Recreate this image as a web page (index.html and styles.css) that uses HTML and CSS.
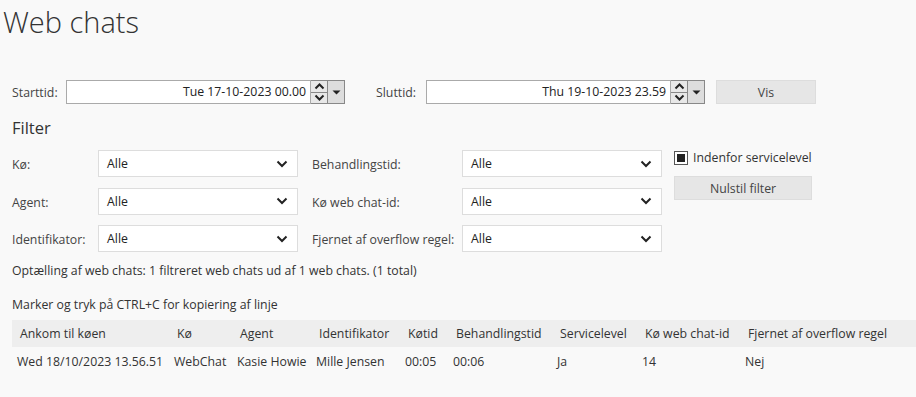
FILE: index.html
```html
<!DOCTYPE html>
<html lang="da">
<head>
    <meta charset="UTF-8">
    <title>Web chats</title>
    <link rel="stylesheet" href="styles.css">
</head>
<body>
    <h1 class="title">Web chats</h1>

    <div class="period">
        <label class="period-label">Starttid:</label>
        <div class="datetime">
            <div class="datetime-value">Tue 17-10-2023 00.00</div>
            <div class="spin">
                <span class="spin-up"><svg width="11" height="7" viewBox="0 0 11 7"><path d="M1.5 5.5 L5.5 1.5 L9.5 5.5" fill="none" stroke="#222" stroke-width="2"/></svg></span>
                <span class="spin-down"><svg width="11" height="7" viewBox="0 0 11 7"><path d="M1.5 1.5 L5.5 5.5 L9.5 1.5" fill="none" stroke="#222" stroke-width="2"/></svg></span>
            </div>
            <div class="drop"><svg width="9" height="5" viewBox="0 0 9 5"><path d="M0.5 0.5 H8.5 L4.5 4.5 Z" fill="#222"/></svg></div>
        </div>

        <label class="period-label end">Sluttid:</label>
        <div class="datetime">
            <div class="datetime-value">Thu 19-10-2023 23.59</div>
            <div class="spin">
                <span class="spin-up"><svg width="11" height="7" viewBox="0 0 11 7"><path d="M1.5 5.5 L5.5 1.5 L9.5 5.5" fill="none" stroke="#222" stroke-width="2"/></svg></span>
                <span class="spin-down"><svg width="11" height="7" viewBox="0 0 11 7"><path d="M1.5 1.5 L5.5 5.5 L9.5 1.5" fill="none" stroke="#222" stroke-width="2"/></svg></span>
            </div>
            <div class="drop"><svg width="9" height="5" viewBox="0 0 9 5"><path d="M0.5 0.5 H8.5 L4.5 4.5 Z" fill="#222"/></svg></div>
        </div>

        <button class="btn btn-vis">Vis</button>
    </div>

    <h2 class="filter-title">Filter</h2>

    <div class="filter">
        <div class="filter-grid">
            <span class="f-label">Kø:</span>
            <div class="select"><span>Alle</span><svg width="12" height="8" viewBox="0 0 12 8"><path d="M1.5 1.5 L6 6 L10.5 1.5" fill="none" stroke="#222" stroke-width="2"/></svg></div>
            <span class="f-label">Behandlingstid:</span>
            <div class="select"><span>Alle</span><svg width="12" height="8" viewBox="0 0 12 8"><path d="M1.5 1.5 L6 6 L10.5 1.5" fill="none" stroke="#222" stroke-width="2"/></svg></div>

            <span class="f-label">Agent:</span>
            <div class="select"><span>Alle</span><svg width="12" height="8" viewBox="0 0 12 8"><path d="M1.5 1.5 L6 6 L10.5 1.5" fill="none" stroke="#222" stroke-width="2"/></svg></div>
            <span class="f-label">Kø web chat-id:</span>
            <div class="select"><span>Alle</span><svg width="12" height="8" viewBox="0 0 12 8"><path d="M1.5 1.5 L6 6 L10.5 1.5" fill="none" stroke="#222" stroke-width="2"/></svg></div>

            <span class="f-label">Identifikator:</span>
            <div class="select"><span>Alle</span><svg width="12" height="8" viewBox="0 0 12 8"><path d="M1.5 1.5 L6 6 L10.5 1.5" fill="none" stroke="#222" stroke-width="2"/></svg></div>
            <span class="f-label">Fjernet af overflow regel:</span>
            <div class="select"><span>Alle</span><svg width="12" height="8" viewBox="0 0 12 8"><path d="M1.5 1.5 L6 6 L10.5 1.5" fill="none" stroke="#222" stroke-width="2"/></svg></div>
        </div>

        <div class="filter-side">
            <label class="check"><span class="check-box"><span class="check-mark"></span></span>Indenfor servicelevel</label>
            <button class="btn btn-reset">Nulstil filter</button>
        </div>
    </div>

    <p class="info count">Optælling af web chats: 1 filtreret web chats ud af 1 web chats. (1 total)</p>
    <p class="info copy">Marker og tryk på CTRL+C for kopiering af linje</p>

    <div class="grid">
        <div class="grid-row grid-head">
            <span>Ankom til køen</span>
            <span>Kø</span>
            <span>Agent</span>
            <span>Identifikator</span>
            <span>Køtid</span>
            <span>Behandlingstid</span>
            <span>Servicelevel</span>
            <span>Kø web chat-id</span>
            <span>Fjernet af overflow regel</span>
        </div>
        <div class="grid-row grid-data">
            <span>Wed 18/10/2023 13.56.51</span>
            <span>WebChat</span>
            <span>Kasie Howie</span>
            <span>Mille Jensen</span>
            <span>00:05</span>
            <span>00:06</span>
            <span>Ja</span>
            <span>14</span>
            <span>Nej</span>
        </div>
    </div>
</body>
</html>
```

FILE: styles.css
```css
body {
    margin: 0;
    background: #f9f9f9;
    color: #333;
    font-family: "Open Sans", "Noto Sans", sans-serif;
    font-size: 12.3px;
    overflow: hidden;
}
.title {
    margin: 0;
    padding: 2px 0 0 3px;
    height: 78px;
    font-size: 29px;
    font-weight: 300;
    color: #333;
    line-height: 40px;
}
.period {
    display: flex;
    align-items: center;
    padding-left: 12px;
    height: 24px;
}
.period-label {
    width: 54px;
    color: #444;
}
.period-label.end {
    margin-left: 31px;
    width: 50px;
}
.datetime {
    display: flex;
    height: 24px;
}
.datetime-value {
    width: 245px;
    box-sizing: border-box;
    border: 1px solid #aaa;
    background: #fff;
    text-align: right;
    padding-right: 4px;
    line-height: 22px;
    color: #222;
}
.spin {
    width: 17px;
    box-sizing: border-box;
    border: 1px solid #888;
    border-left: none;
    display: flex;
    flex-direction: column;
    background: #e8e8e8;
}
.spin span {
    flex: 1;
    display: flex;
    align-items: center;
    justify-content: center;
}
.spin-up {
    border-bottom: 1px solid #888;
}
.drop {
    width: 17px;
    box-sizing: border-box;
    border: 1px solid #888;
    border-left: none;
    background: #ddd;
    display: flex;
    align-items: center;
    justify-content: center;
}
.btn {
    font-family: inherit;
    font-size: 12.3px;
    background: #e6e6e6;
    border: 1px solid #ddd;
    color: #444;
    height: 24px;
    padding: 0;
}
.btn-vis {
    margin-left: 11px;
    width: 100px;
}
.filter-title {
    margin: 0;
    padding: 12px 0 0 12px;
    height: 28px;
    font-size: 16.5px;
    font-weight: 400;
    color: #333;
}
.filter {
    display: flex;
    padding-left: 12px;
    margin-top: 6px;
}
.filter-grid {
    display: grid;
    grid-template-columns: 86px 200px 164px 200px;
    grid-auto-rows: 27px;
    row-gap: 10.5px;
    align-items: center;
}
.f-label {
    color: #444;
    padding-top: 2px;
    white-space: nowrap;
}
.f-label:nth-child(4n+3) {
    padding-left: 14px;
}
.select {
    height: 27px;
    box-sizing: border-box;
    border: 1px solid #ddd;
    background: #fff;
    display: flex;
    align-items: center;
    justify-content: space-between;
    padding: 0 9px 0 8px;
    color: #222;
}
.filter-side {
    margin-left: 12px;
    display: flex;
    flex-direction: column;
    align-items: flex-start;
}
.check {
    display: flex;
    align-items: center;
    height: 15px;
    color: #333;
}
.check-box {
    width: 14px;
    height: 14px;
    box-sizing: border-box;
    border: 1px solid #555;
    background: #fff;
    display: flex;
    align-items: center;
    justify-content: center;
    margin-right: 5px;
}
.check-mark {
    width: 8px;
    height: 8px;
    background: #222;
}
.btn-reset {
    margin-top: 11px;
    width: 138px;
}
.info {
    margin: 0;
    padding-left: 12px;
    color: #333;
}
.count {
    margin-top: 10px;
}
.copy {
    margin-top: 17px;
}
.grid {
    margin: 7px 0 0 12px;
}
.grid-row {
    display: grid;
    grid-template-columns: 157px 63px 79px 89px 48px 104px 85px 103px 200px;
    white-space: nowrap;
}
.grid-head {
    background: #eee;
    height: 27px;
    align-items: center;
    color: #333;
}
.grid-head span {
    padding-left: 8px;
}
.grid-data {
    height: 28px;
    align-items: center;
    color: #333;
}
.grid-data span {
    padding-left: 5px;
}
```
